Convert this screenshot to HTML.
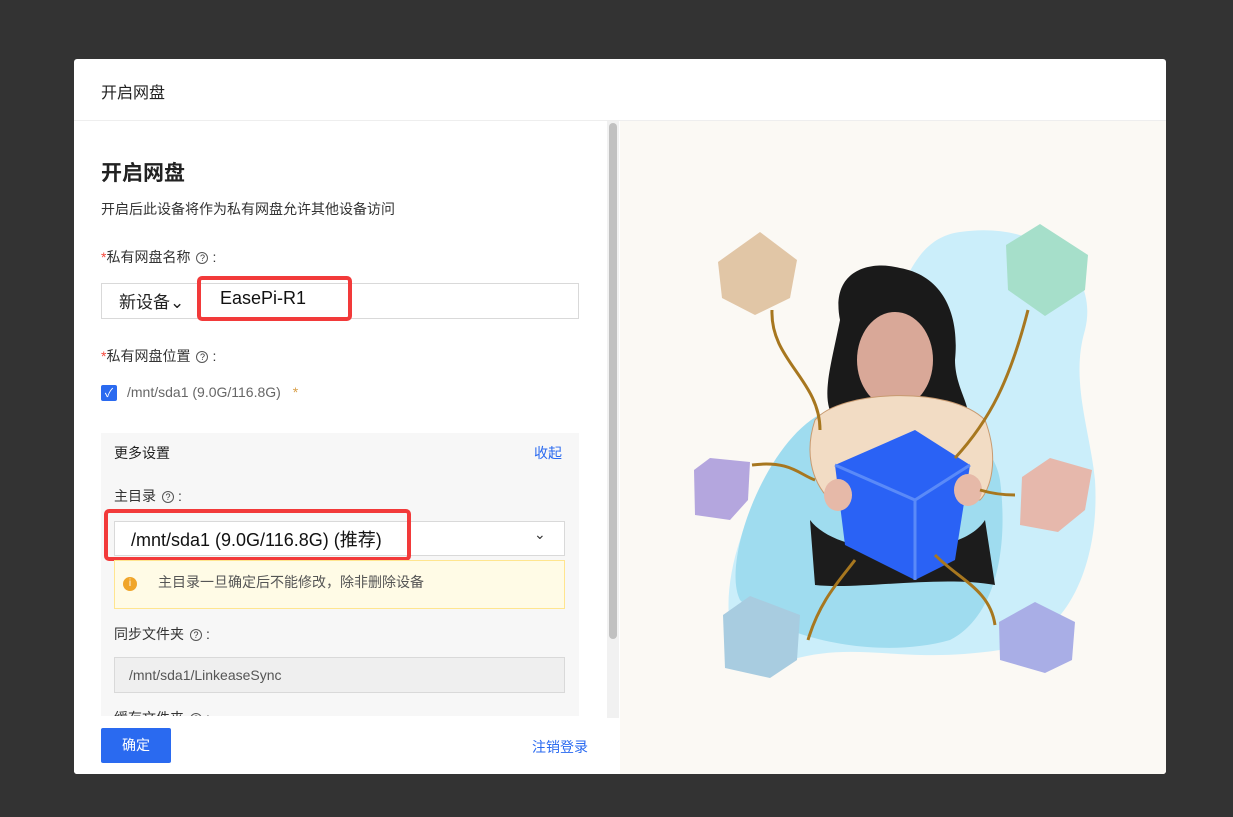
<!DOCTYPE html>
<html><head><meta charset="utf-8"><style>
*{margin:0;padding:0;box-sizing:border-box}
body{width:1233px;height:817px;background:#333;font-family:"Liberation Sans","Noto Sans CJK SC",sans-serif;position:relative;overflow:hidden;color:#333}
.dlg{position:absolute;left:74px;top:59px;width:1092px;height:715px;background:#fff;border-radius:3px;overflow:hidden}
.hd{height:62px;border-bottom:1px solid #eee;font-size:16px;padding:20px 0 0 27px;color:#222}
.right{position:absolute;left:546px;top:62px;width:546px;height:653px;background:#fbf9f4}
.a{position:absolute;white-space:nowrap}
.sb{position:absolute;left:533px;top:62px;width:12px;height:597px;background:#f1f1f1}
.sb i{position:absolute;left:2px;top:2px;width:8px;height:516px;background:#c1c1c1;border-radius:4px}
.red{position:absolute;border:4px solid #f23a3a;border-radius:5px}
.q{display:inline-block;width:12px;height:12px;border:1px solid #555;border-radius:50%;font-size:9px;line-height:10px;text-align:center;vertical-align:1px;margin:0 4px 0 6px}
.st{color:#f5483b}
</style></head><body>
<div class="dlg">
<div class="hd">开启网盘</div>
<div class="a" style="left:27px;top:98px;font-size:21px;font-weight:bold;color:#222">开启网盘</div>
<div class="a" style="left:27px;top:140px;font-size:14px;color:#333">开启后此设备将作为私有网盘允许其他设备访问</div>
<div class="a" style="left:27px;top:188px;font-size:14px"><span class="st">*</span>私有网盘名称<span class="q">?</span>:</div>
<div class="a" style="left:27px;top:224px;width:478px;height:36px;border:1px solid #d9d9d9"></div>
<div class="a" style="left:45px;top:229px;font-size:17px;color:#222">新设备⌄</div>
<div class="red" style="left:123px;top:217px;width:155px;height:45px"></div>
<div class="a" style="left:146px;top:229px;font-size:18px;color:#111">EasePi-R1</div>
<div class="a" style="left:27px;top:287px;font-size:14px"><span class="st">*</span>私有网盘位置<span class="q">?</span>:</div>
<div class="a" style="left:27px;top:326px;width:16px;height:16px;background:#2a6af0;border-radius:2px;color:#fff;font-size:12px;text-align:center;line-height:16px">✓</div>
<div class="a" style="left:53px;top:325px;font-size:14px;color:#666">/mnt/sda1 (9.0G/116.8G) <span style="color:#d9a04a;margin-left:8px">*</span></div>
<div class="a" style="left:27px;top:374px;width:478px;height:290px;background:#f7f7f7"></div>
<div class="a" style="left:40px;top:384px;font-size:14px;color:#222">更多设置</div>
<div class="a" style="left:460px;top:384px;font-size:14px;color:#2a6af0">收起</div>
<div class="a" style="left:40px;top:427px;font-size:14px">主目录<span class="q">?</span>:</div>
<div class="a" style="left:40px;top:462px;width:451px;height:35px;background:#fff;border:1px solid #d9d9d9"></div>
<div class="a" style="left:460px;top:467px;font-size:14px">⌄</div>
<div class="red" style="left:30px;top:450px;width:307px;height:52px"></div>
<div class="a" style="left:57px;top:467px;font-size:18px;color:#111">/mnt/sda1 (9.0G/116.8G) (推荐)</div>
<div class="a" style="left:40px;top:501px;width:451px;height:49px;background:#fffbe6;border:1px solid #ffe58f"></div>
<div class="a" style="left:49px;top:518px;width:14px;height:14px;border-radius:50%;background:#f0a52a;color:#fff;font-size:10px;text-align:center;line-height:14px">i</div>
<div class="a" style="left:84px;top:513px;font-size:14px;color:#555">主目录一旦确定后不能修改，除非删除设备</div>
<div class="a" style="left:40px;top:565px;font-size:14px">同步文件夹<span class="q">?</span>:</div>
<div class="a" style="left:40px;top:598px;width:451px;height:36px;background:#efefef;border:1px solid #d9d9d9;font-size:14px;color:#555;padding:9px 0 0 14px">/mnt/sda1/LinkeaseSync</div>
<div class="a" style="left:40px;top:649px;font-size:14px">缓存文件夹<span class="q">?</span>:</div>
<div class="a" style="left:0;top:657px;width:546px;height:58px;background:#fff"></div>
<div class="a" style="left:27px;top:669px;width:70px;height:35px;background:#2a6af0;color:#fff;font-size:14px;text-align:center;line-height:35px;border-radius:2px">确定</div>
<div class="a" style="left:458px;top:678px;font-size:14px;color:#2a6af0">注销登录</div>
<div class="sb"><i></i></div>
<div class="right">
<svg width="546" height="653" viewBox="620 121 546 653">
<path d="M960 232 C1040 220 1100 270 1085 330 C1070 380 1090 430 1095 480 C1100 560 1070 640 1000 650 C900 665 860 640 790 660 C720 680 720 600 740 540 C760 470 820 420 860 380 C900 320 900 240 960 232Z" fill="#cbeefa"/>
<path d="M830 410 C900 390 990 420 1000 480 C1010 560 990 620 950 640 C880 660 780 640 740 600 C720 560 770 430 830 410Z" fill="#9fdcef"/>
<path d="M840 320 C830 270 870 260 900 268 C940 275 960 310 955 360 C955 390 975 410 965 420 L835 420 C820 400 830 370 840 320Z" fill="#1a1a1a"/>
<ellipse cx="895" cy="360" rx="38" ry="48" fill="#d9a898"/>
<path d="M815 420 C840 390 950 385 985 420 C1000 460 990 490 980 500 L830 500 C810 480 805 450 815 420Z" fill="#f2dcc4" stroke="#c89a70"/>
<path d="M810 520 C840 560 960 560 985 520 L995 585 C940 575 860 590 815 585Z" fill="#1c1c1c"/>
<path d="M835 465 L915 430 L970 465 L955 560 L915 580 L845 545Z" fill="#2a62f5"/>
<path d="M835 465 L915 500 L970 465 M915 500 L915 580" stroke="#5a8af8" stroke-width="3" fill="none"/>
<ellipse cx="838" cy="495" rx="14" ry="16" fill="#e6b9a8"/><ellipse cx="968" cy="490" rx="14" ry="16" fill="#e6b9a8"/>
<g fill="#e1c6a6"><path d="M718 262 L760 232 L797 260 L790 298 L755 315 L722 298Z"/></g>
<g fill="#a6dfca"><path d="M1006 245 L1040 224 L1088 255 L1085 290 L1045 316 L1008 290Z"/></g>
<g fill="#b4a6de"><path d="M694 470 L710 458 L750 462 L748 500 L730 520 L695 515Z"/></g>
<g fill="#e6b8ac"><path d="M1022 477 L1050 458 L1092 470 L1085 510 L1058 532 L1020 525Z"/></g>
<g fill="#a8cce0"><path d="M723 615 L750 596 L800 615 L797 660 L770 678 L725 668Z"/></g>
<g fill="#a9aee6"><path d="M999 622 L1035 602 L1075 622 L1072 660 L1045 673 L1000 660Z"/></g>
<g stroke="#a7771f" stroke-width="3" fill="none"><path d="M772 310 C770 360 820 380 820 430"/><path d="M1028 310 C1010 380 990 420 955 458"/><path d="M752 465 C790 460 800 475 815 480"/><path d="M1015 495 C1000 495 990 493 980 490"/><path d="M808 640 C820 600 840 580 855 560"/><path d="M995 625 C990 590 960 580 935 555"/></g>
</svg>
</div>
</div>
</body></html>
